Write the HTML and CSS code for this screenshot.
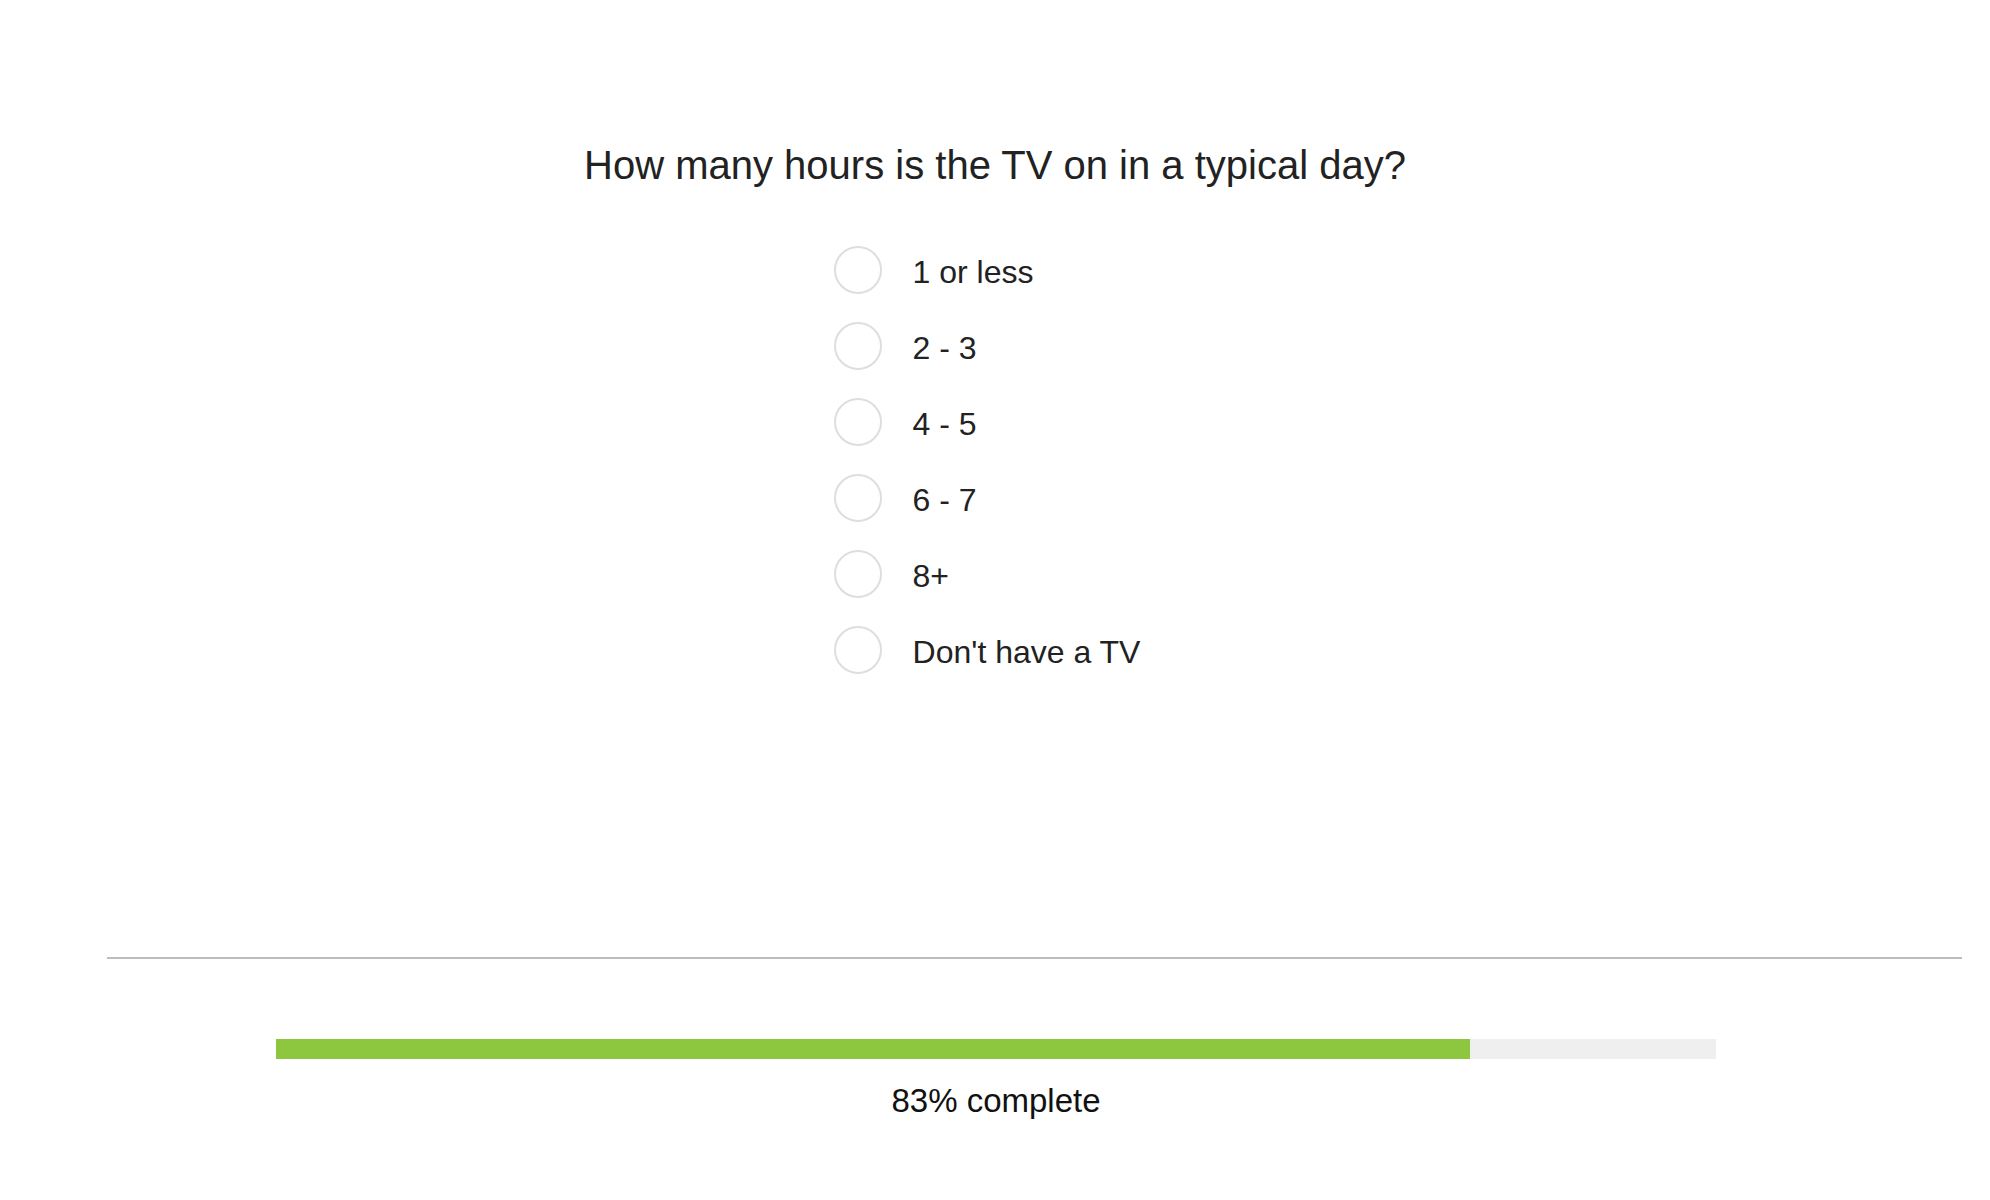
FILE: index.html
```html
<!DOCTYPE html>
<html lang="en">
<head>
<meta charset="utf-8">
<title>Survey</title>
<link rel="stylesheet" href="styles.css">
</head>
<body>
<main class="survey">
  <section class="question">
    <h1 class="question-title">How many hours is the TV on in a typical day?</h1>
    <ul class="options">
      <li class="option"><span class="radio"></span><span class="option-label">1 or less</span></li>
      <li class="option"><span class="radio"></span><span class="option-label">2 - 3</span></li>
      <li class="option"><span class="radio"></span><span class="option-label">4 - 5</span></li>
      <li class="option"><span class="radio"></span><span class="option-label">6 - 7</span></li>
      <li class="option"><span class="radio"></span><span class="option-label">8+</span></li>
      <li class="option"><span class="radio"></span><span class="option-label">Don't have a TV</span></li>
    </ul>
  </section>
  <footer class="footer">
    <div class="progress">
      <div class="progress-fill" style="width: 82.9%"></div>
    </div>
    <div class="progress-text">83% complete</div>
  </footer>
</main>
</body>
</html>
```

FILE: styles.css
```css
* { box-sizing: border-box; }
html, body { margin: 0; padding: 0; background: #fff; }
body {
  font-family: "Liberation Sans", Arial, Helvetica, sans-serif;
  color: #222;
}
.survey {
  width: 1990px;
  height: 1200px;
  display: flex;
  flex-direction: column;
}
.question {
  display: flex;
  flex-direction: column;
  align-items: center;
  padding-top: 143px;
  height: 957px;
}
.question-title {
  margin: 0;
  font-weight: normal;
  font-size: 40px;
  line-height: 44px;
  color: #222;
  text-align: center;
}
.options {
  list-style: none;
  margin: 45px 0 0 0;
  padding: 0;
  display: flex;
  flex-direction: column;
  margin-left: -16px;
}
.option {
  display: flex;
  align-items: center;
  height: 76px;
}
.radio {
  width: 48px;
  height: 48px;
  border: 2px solid #dedede;
  border-radius: 50%;
  flex: none;
}
.option-label {
  margin-left: 31px;
  padding-top: 5px;
  font-size: 32px;
  color: #222;
}
.footer {
  margin-left: 107px;
  margin-right: 28px;
  border-top: 2px solid #bdbdbd;
  display: flex;
  flex-direction: column;
  align-items: center;
  padding-top: 80px;
}
.progress {
  width: 1440px;
  height: 20px;
  background: #efefef;
  margin-left: -77px;
}
.progress-fill {
  height: 100%;
  background: #8dc63f;
}
.progress-text {
  margin-top: 23px;
  font-size: 33px;
  color: #111;
  margin-left: -77px;
}
```
